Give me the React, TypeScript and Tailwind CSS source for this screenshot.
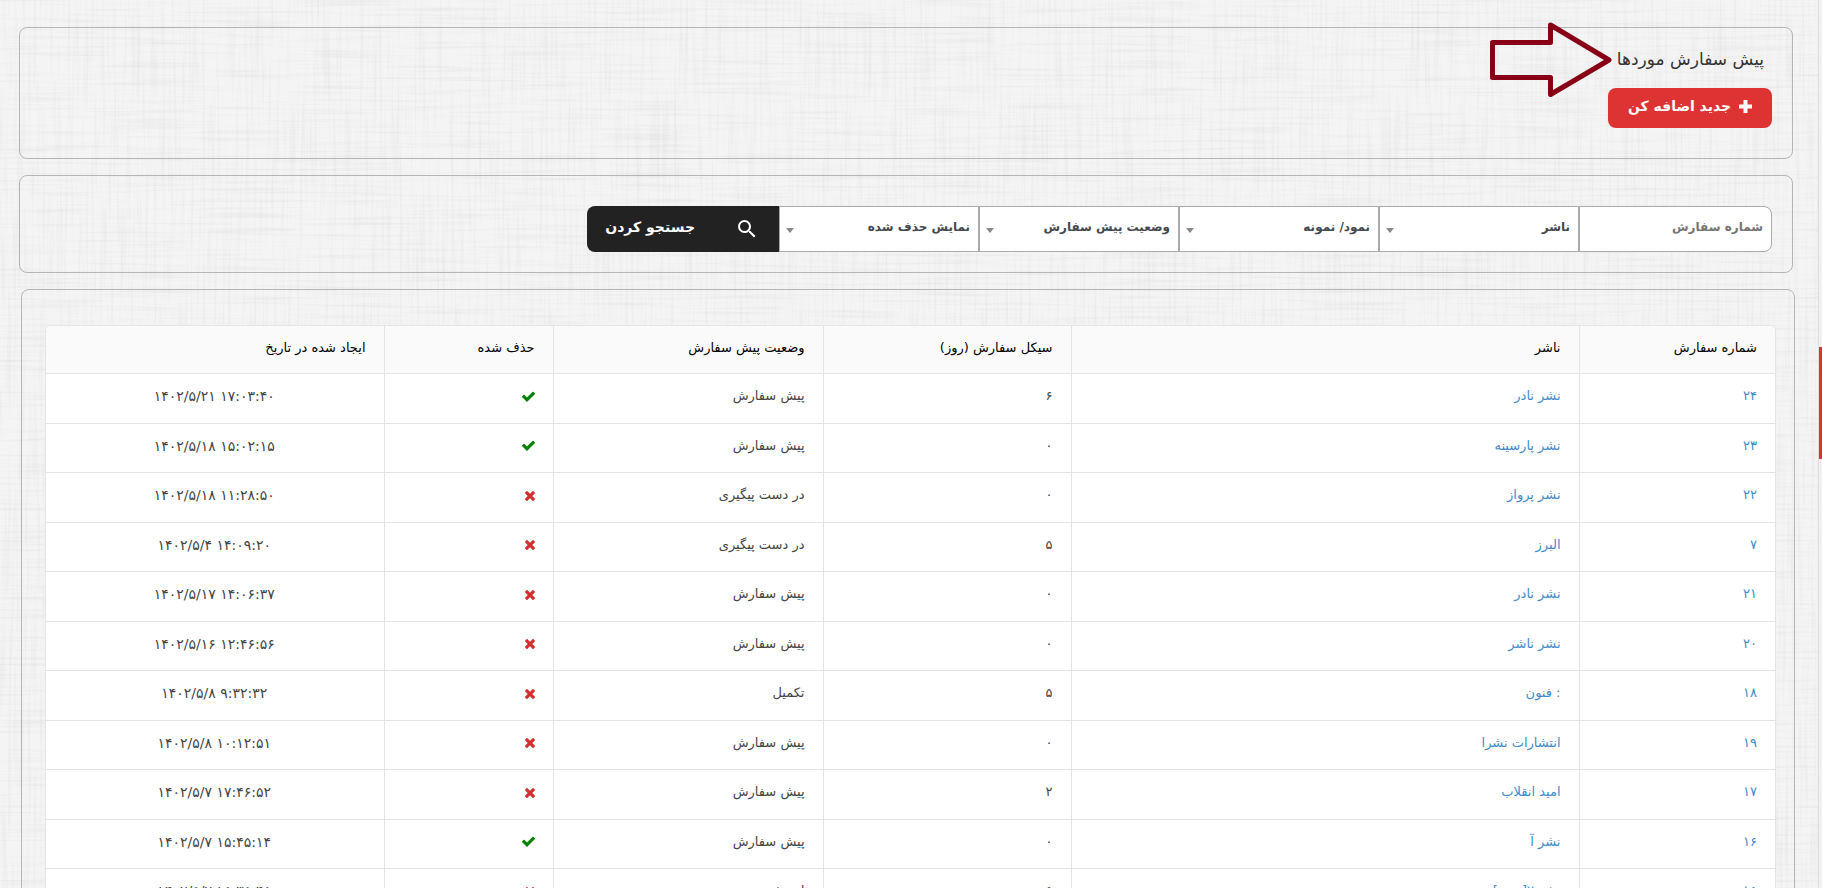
import { useState } from "react";
import { MdSearch } from "react-icons/md";

type Order = {
  id: string;
  publisher: string;
  cycle: string;
  status: string;
  deleted: boolean;
  createdAt: string;
};

const orders: Order[] = [
  { id: "۲۴", publisher: "نشر نادر", cycle: "۶", status: "پیش سفارش", deleted: true, createdAt: "۱۴۰۲/۵/۲۱ ۱۷:۰۳:۴۰" },
  { id: "۲۳", publisher: "نشر پارسینه", cycle: "۰", status: "پیش سفارش", deleted: true, createdAt: "۱۴۰۲/۵/۱۸ ۱۵:۰۲:۱۵" },
  { id: "۲۲", publisher: "نشر پرواز", cycle: "۰", status: "در دست پیگیری", deleted: false, createdAt: "۱۴۰۲/۵/۱۸ ۱۱:۲۸:۵۰" },
  { id: "۷", publisher: "البرز", cycle: "۵", status: "در دست پیگیری", deleted: false, createdAt: "۱۴۰۲/۵/۴ ۱۴:۰۹:۲۰" },
  { id: "۲۱", publisher: "نشر نادر", cycle: "۰", status: "پیش سفارش", deleted: false, createdAt: "۱۴۰۲/۵/۱۷ ۱۴:۰۶:۳۷" },
  { id: "۲۰", publisher: "نشر ناشر", cycle: "۰", status: "پیش سفارش", deleted: false, createdAt: "۱۴۰۲/۵/۱۶ ۱۲:۴۶:۵۶" },
  { id: "۱۸", publisher: ": فنون", cycle: "۵", status: "تکمیل", deleted: false, createdAt: "۱۴۰۲/۵/۸ ۹:۳۲:۳۲" },
  { id: "۱۹", publisher: "انتشارات نشرا", cycle: "۰", status: "پیش سفارش", deleted: false, createdAt: "۱۴۰۲/۵/۸ ۱۰:۱۲:۵۱" },
  { id: "۱۷", publisher: "امید انقلاب", cycle: "۲", status: "پیش سفارش", deleted: false, createdAt: "۱۴۰۲/۵/۷ ۱۷:۴۶:۵۲" },
  { id: "۱۶", publisher: "نشر آ", cycle: "۰", status: "پیش سفارش", deleted: true, createdAt: "۱۴۰۲/۵/۷ ۱۵:۴۵:۱۴" },
  { id: "۱۵", publisher: "نشر ۷[دنیی]", cycle: "۵", status: "لغو شده", deleted: false, createdAt: "۱۴۰۲/۵/۷ ۱۵:۳۵:۴۵" },
];

const filters = [
  { id: "publisher", label: "ناشر" },
  { id: "sample", label: "نمود/ نمونه" },
  { id: "status", label: "وضعیت پیش سفارش" },
  { id: "deleted", label: "نمایش حذف شده" },
];

function CheckIcon() {
  return (
    <svg viewBox="121 0 1550 1792" className="h-[15px] w-[13px] fill-[#008000]" role="img" aria-label="بله">
      <path d="M1671 566q0 40-28 68l-724 724-136 136q-28 28-68 28t-68-28l-136-136-362-362q-28-28-28-68t28-68l136-136q28-28 68-28t68 28l294 295 656-657q28-28 68-28t68 28l136 136q28 28 28 68z" />
    </svg>
  );
}

function TimesIcon() {
  return (
    <svg viewBox="302 0 1188 1792" className="h-[15px] w-[10px] fill-[#d32f2f]" role="img" aria-label="خیر">
      <path d="M1490 1322q0 40-28 68l-136 136q-28 28-68 28t-68-28l-294-294-294 294q-28 28-68 28t-68-28l-136-136q-28-28-28-68t28-68l294-294-294-294q-28-28-28-68t28-68l136-136q28-28 68-28t68 28l294 294 294-294q28-28 68-28t68 28l136 136q28 28 28 68t-28 68l-294 294 294 294q28 28 28 68z" />
    </svg>
  );
}

// Woven paper look: one noise layer stretched along x, one along y
function LinenBackground() {
  return (
    <svg className="absolute inset-0 -z-10 h-full w-full" aria-hidden="true">
      <filter id="weft" x="0" y="0" width="100%" height="100%">
        <feTurbulence type="fractalNoise" baseFrequency="0.01 0.35" numOctaves="3" seed="4" />
        <feColorMatrix values="0 0 0 0 0.55  0 0 0 0 0.55  0 0 0 0 0.57  1.5 0 0 0 -0.72" />
      </filter>
      <filter id="warp" x="0" y="0" width="100%" height="100%">
        <feTurbulence type="fractalNoise" baseFrequency="0.35 0.01" numOctaves="3" seed="9" />
        <feColorMatrix values="0 0 0 0 0.55  0 0 0 0 0.55  0 0 0 0 0.57  1.5 0 0 0 -0.72" />
      </filter>
      <rect width="100%" height="100%" filter="url(#weft)" opacity="0.3" />
      <rect width="100%" height="100%" filter="url(#warp)" opacity="0.3" />
    </svg>
  );
}

function PageHeader() {
  return (
    <section className="relative h-[132px] shrink-0 rounded-lg border border-[#b5b5b5] px-5 pt-4">
      <h1 className="px-2 text-[17px] leading-[30px] text-[#333]">پیش سفارش موردها</h1>
      <button
        type="button"
        className="mt-[14px] flex h-10 w-[164px] items-center justify-center gap-2 rounded-lg bg-[#dd3333] pb-1 text-sm font-bold text-white"
      >
        <svg viewBox="0 0 13 13" className="size-[13px] fill-white" aria-hidden="true">
          <path d="M4.500 0h4v4.500H13v4H8.500V13h-4V8.500H0v-4h4.500z" />
        </svg>
        جدید اضافه کن
      </button>
      <svg
        viewBox="0 0 124 76"
        className="absolute -top-[7px] right-[179px] h-[76px] w-[124px] fill-none stroke-[#880015] stroke-[5px]"
        aria-hidden="true"
      >
        <path strokeLinejoin="round" d="M3.500 21.500H61.500V4L120 39 61.500 73.500V56.500H3.500Z" />
      </svg>
    </section>
  );
}

function SearchBar() {
  const [orderNo, setOrderNo] = useState("");

  return (
    <section className="shrink-0 rounded-lg border border-[#b5b5b5] px-5 pt-[30px] pb-5">
      <form className="flex h-[46px] text-xs font-bold text-[#444950]" onSubmit={(e) => e.preventDefault()}>
        <input
          aria-label="شماره سفارش"
          placeholder="شماره سفارش"
          value={orderNo}
          onChange={(e) => setOrderNo(e.target.value)}
          className="w-[193px] rounded-r-lg border border-[#aaa] bg-white px-2 pb-1 outline-none placeholder:text-[#757575]"
        />
        {filters.map((filter) => (
          <div key={filter.id} className="relative w-[200px]">
            <select
              aria-label={filter.label}
              className="h-full w-full appearance-none border border-[#aaa] bg-white px-2 pb-1 outline-none"
            >
              <option>{filter.label}</option>
            </select>
            <span className="pointer-events-none absolute top-[22px] left-[7px] border-x-4 border-t-[5px] border-x-transparent border-t-[#888]" />
          </div>
        ))}
        <button
          type="submit"
          className="flex w-[192px] items-center gap-10 rounded-l-lg bg-[#222] pr-5 text-sm text-white"
        >
          <MdSearch className="size-6" />
          <span className="pb-1">جستجو کردن</span>
        </button>
      </form>
    </section>
  );
}

function OrdersTable() {
  return (
    <section className="-mr-[2px] ml-[2px] shrink-0 rounded-lg border border-[#b5b5b5] pt-[35px] pr-[18px] pl-[23px]">
      <div className="overflow-hidden rounded-t-md border border-[#e3e4e5]">
        <table className="w-full table-fixed bg-white text-right text-[13px] text-[#444]">
          <colgroup>
            <col className="w-[196px]" />
            <col className="w-[508px]" />
            <col className="w-[248px]" />
            <col className="w-[270px]" />
            <col className="w-[169px]" />
            <col className="w-[339px]" />
          </colgroup>
          <thead className="bg-[#fafafa] text-black">
            <tr className="h-[47px] divide-x divide-[#e3e4e5] border-b border-[#e3e4e5]">
              <th className="px-[18px] pb-1 font-normal">شماره سفارش</th>
              <th className="px-[18px] pb-1 font-normal">ناشر</th>
              <th className="px-[18px] pb-1 font-normal">سیکل سفارش (روز)</th>
              <th className="px-[18px] pb-1 font-normal">وضعیت پیش سفارش</th>
              <th className="px-[18px] pb-1 font-normal">حذف شده</th>
              <th className="px-[18px] pb-1 font-normal">ایجاد شده در تاریخ</th>
            </tr>
          </thead>
          <tbody>
            {orders.map((order) => (
              <tr
                key={order.id}
                className="divide-x divide-[#e3e4e5] border-b border-[#e3e4e5] odd:h-[50px] even:h-[49px]"
              >
                <td className="px-[18px] pb-1">
                  <a href="#" className="text-[#428bca]">{order.id}</a>
                </td>
                <td className="px-[18px] pb-1">
                  <a href="#" className="text-[#428bca]">{order.publisher}</a>
                </td>
                <td className="px-[18px] pb-1">{order.cycle}</td>
                <td className="px-[18px] pb-1">{order.status}</td>
                <td className="px-[18px] pb-1">{order.deleted ? <CheckIcon /> : <TimesIcon />}</td>
                <td className="px-[18px] pb-1 text-center text-sm" dir="ltr">{order.createdAt}</td>
              </tr>
            ))}
          </tbody>
        </table>
      </div>
    </section>
  );
}

export default function App() {
  return (
    <div
      dir="rtl"
      lang="fa"
      className="relative isolate flex h-screen overflow-hidden bg-[#f4f4f4] font-['DejaVu_Sans',sans-serif]"
    >
      <LinenBackground />
      <div className="w-1 shrink-0 border-l border-[#ddd] bg-[#f1f1f1] pt-[347px]">
        <div className="h-28 bg-[#dd3333]" />
      </div>
      <main className="flex min-w-0 grow flex-col gap-4 pt-[27px] pr-[25px] pl-[19px]">
        <PageHeader />
        <SearchBar />
        <OrdersTable />
      </main>
    </div>
  );
}
